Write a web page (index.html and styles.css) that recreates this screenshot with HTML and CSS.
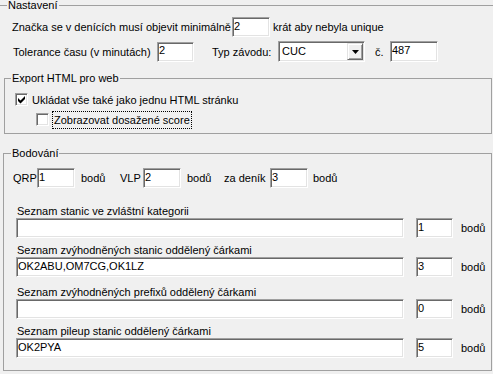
FILE: index.html
```html
<!DOCTYPE html>
<html lang="cs">
<head>
  <meta charset="UTF-8" />
  <meta name="viewport" content="width=device-width, initial-scale=1.0"/>
  <title>Nastavení</title>
  <link rel="stylesheet" href="styles.css">
</head>
<body>
  <fieldset class="group group-main">
    <legend>Nastavení</legend>

    <div class="row row-first">
      <label class="lbl w-znacka" for="min-count">Značka se v denících musí objevit minimálně</label>
      <input class="edit w38" id="min-count" type="text" value="2" />
      <span class="after">krát aby nebyla unique</span>
    </div>

    <div class="row row-second">
      <label class="lbl w-tol" for="tolerance">Tolerance času (v minutách)</label>
      <input class="edit w37" id="tolerance" type="text" value="2" />
      <label class="lbl w-typ">Typ závodu:</label>
      <div class="combo">
        <span class="combo-text">CUC</span>
        <span class="combo-btn">
          <svg width="7" height="4" viewBox="0 0 7 4"><polygon points="0,0 7,0 3.5,4" fill="#000"/></svg>
        </span>
      </div>
      <label class="lbl w-c" for="contest-no">č.</label>
      <input class="edit w48 tall" id="contest-no" type="text" value="487" />
    </div>

    <fieldset class="group group-export">
      <legend>Export HTML pro web</legend>
      <label class="check check-first">
        <span class="box">
          <svg width="11" height="11" viewBox="0 0 11 11"><polygon points="2,4 4.5,6.5 9,2 9,5 4.5,9.5 2,7" fill="#000"/></svg>
        </span>
        Ukládat vše také jako jednu HTML stránku
      </label>
      <label class="check check-second">
        <span class="box"></span>
        <span class="focus">Zobrazovat dosažené score</span>
      </label>
    </fieldset>
  </fieldset>

  <fieldset class="group group-points">
    <legend>Bodování</legend>

    <div class="row row-points">
      <label class="lbl w-qrp">QRP</label>
      <input class="edit w38" type="text" value="1" />
      <span class="lbl w-bodu1">bodů</span>
      <label class="lbl w-vlp">VLP</label>
      <input class="edit w38" type="text" value="2" />
      <span class="lbl w-bodu2">bodů</span>
      <label class="lbl w-denik">za deník</label>
      <input class="edit w38" type="text" value="3" />
      <span class="bodu-last">bodů</span>
    </div>

    <div class="list-block list-block-first">
      <div class="list-label">Seznam stanic ve zvláštní kategorii</div>
      <div class="list-row">
        <input class="edit wide" type="text" value="" />
        <input class="edit small" type="text" value="1" />
        <span class="unit">bodů</span>
      </div>
    </div>

    <div class="list-block">
      <div class="list-label">Seznam zvýhodněných stanic oddělený čárkami</div>
      <div class="list-row">
        <input class="edit wide" type="text" value="OK2ABU,OM7CG,OK1LZ" />
        <input class="edit small" type="text" value="3" />
        <span class="unit">bodů</span>
      </div>
    </div>

    <div class="list-block list-block-loose">
      <div class="list-label">Seznam zvýhodněných prefixů oddělený čárkami</div>
      <div class="list-row">
        <input class="edit wide" type="text" value="" />
        <input class="edit small" type="text" value="0" />
        <span class="unit">bodů</span>
      </div>
    </div>

    <div class="list-block">
      <div class="list-label">Seznam pileup stanic oddělený čárkami</div>
      <div class="list-row">
        <input class="edit wide" type="text" value="OK2PYA" />
        <input class="edit small" type="text" value="5" />
        <span class="unit">bodů</span>
      </div>
    </div>
  </fieldset>
</body>
</html>
```

FILE: styles.css
```css
body {
  margin: 0;
  background: #f0f0f0;
  font-family: 'Liberation Sans', Arial, sans-serif;
  font-size: 11px;
  color: #000;
  overflow: hidden;
}

/* group boxes */
.group {
  margin: 0;
  padding: 0;
  border: 1px solid #a0a0a0;
  min-width: 0;
}

.group legend {
  padding: 0 1px;
  line-height: 11px;
}

.group-main {
  border-left: none;
  border-right: none;
  border-bottom: none;
  width: 493px;
  box-sizing: border-box;
}

.group-main legend {
  margin-left: 7px;
}

.group-export {
  margin: 11px 0 0 4px;
  width: 488px;
  box-sizing: border-box;
  padding-bottom: 7px;
}

.group-export legend {
  margin-left: 6px;
}

.group-points {
  margin: 14px 0 0 3px;
  width: 489px;
  box-sizing: border-box;
  padding-bottom: 12px;
}

.group-points legend {
  margin-left: 7px;
}

/* rows */
.row {
  display: flex;
  align-items: center;
}

.row-first {
  margin: 6px 0 0 12px;
  height: 20px;
}

.row-second {
  margin: 4px 0 0 13px;
  height: 21px;
}

.row-points {
  margin: 9px 0 0 9px;
  height: 20px;
}

.lbl {
  flex: none;
  white-space: nowrap;
}

.w-znacka { width: 220px; }
.w-tol { width: 144px; }
.w-typ { width: 66px; margin-left: 18px; }
.w-c { width: 15px; margin-left: 10px; }
.w-qrp { width: 24px; }
.w-bodu1 { width: 39px; margin-left: 6px; }
.w-vlp { width: 23px; }
.w-bodu2 { width: 37px; margin-left: 6px; }
.w-denik { width: 46px; }

.after { margin-left: 3px; }
.bodu-last { margin-left: 5px; }

/* sunken edit box */
.edit {
  flex: none;
  box-sizing: border-box;
  height: 20px;
  margin: 0;
  padding: 0 1px 3px;
  border: 1px solid;
  border-color: #a0a0a0 #fff #fff #a0a0a0;
  box-shadow: inset 1px 1px #696969, inset -1px -1px #e3e3e3;
  background: #fff;
  font-family: inherit;
  font-size: 11px;
  color: #000;
  outline: none;
}

.edit.tall { height: 21px; }
.w37 { width: 37px; }
.w38 { width: 38px; }
.w48 { width: 48px; }

/* combo box */
.combo {
  flex: none;
  display: flex;
  align-items: center;
  box-sizing: border-box;
  width: 87px;
  height: 21px;
  padding: 1px;
  border: 1px solid;
  border-color: #a0a0a0 #fff #fff #a0a0a0;
  box-shadow: inset 1px 1px #696969, inset -1px -1px #e3e3e3;
  background: #fff;
}

.combo-text {
  flex: 1;
  padding: 0 0 2px 2px;
}

.combo-btn {
  display: flex;
  align-items: center;
  justify-content: center;
  box-sizing: border-box;
  width: 16px;
  height: 17px;
  border: 1px solid;
  border-color: #e3e3e3 #696969 #696969 #e3e3e3;
  box-shadow: inset 1px 1px #fff, inset -1px -1px #a0a0a0;
  background: #f0f0f0;
}

/* checkboxes */
.check {
  display: flex;
  align-items: center;
  height: 13px;
  white-space: nowrap;
}

.check-first { margin: 9px 0 0 10px; }
.check-second { margin: 7px 0 0 31px; }

.box {
  flex: none;
  box-sizing: border-box;
  width: 13px;
  height: 13px;
  margin-right: 4px;
  border: 1px solid;
  border-color: #a0a0a0 #fff #fff #a0a0a0;
  box-shadow: inset 1px 1px #696969, inset -1px -1px #e3e3e3;
  background: #fff;
}

.box svg {
  display: block;
}

.focus {
  padding: 2px 1px;
  outline: 1px dotted #000;
}

/* station lists */
.list-block {
  margin-top: 5px;
}

.list-block-first {
  margin-top: 16px;
}

.list-block-loose {
  margin-top: 8px;
}

.list-label {
  margin-left: 13px;
  line-height: 14px;
  height: 14px;
}

.list-row {
  display: flex;
  align-items: center;
  margin-left: 12px;
}

.wide { width: 388px; }
.small { width: 37px; margin-left: 12px; }
.unit { margin-left: 8px; }
```
